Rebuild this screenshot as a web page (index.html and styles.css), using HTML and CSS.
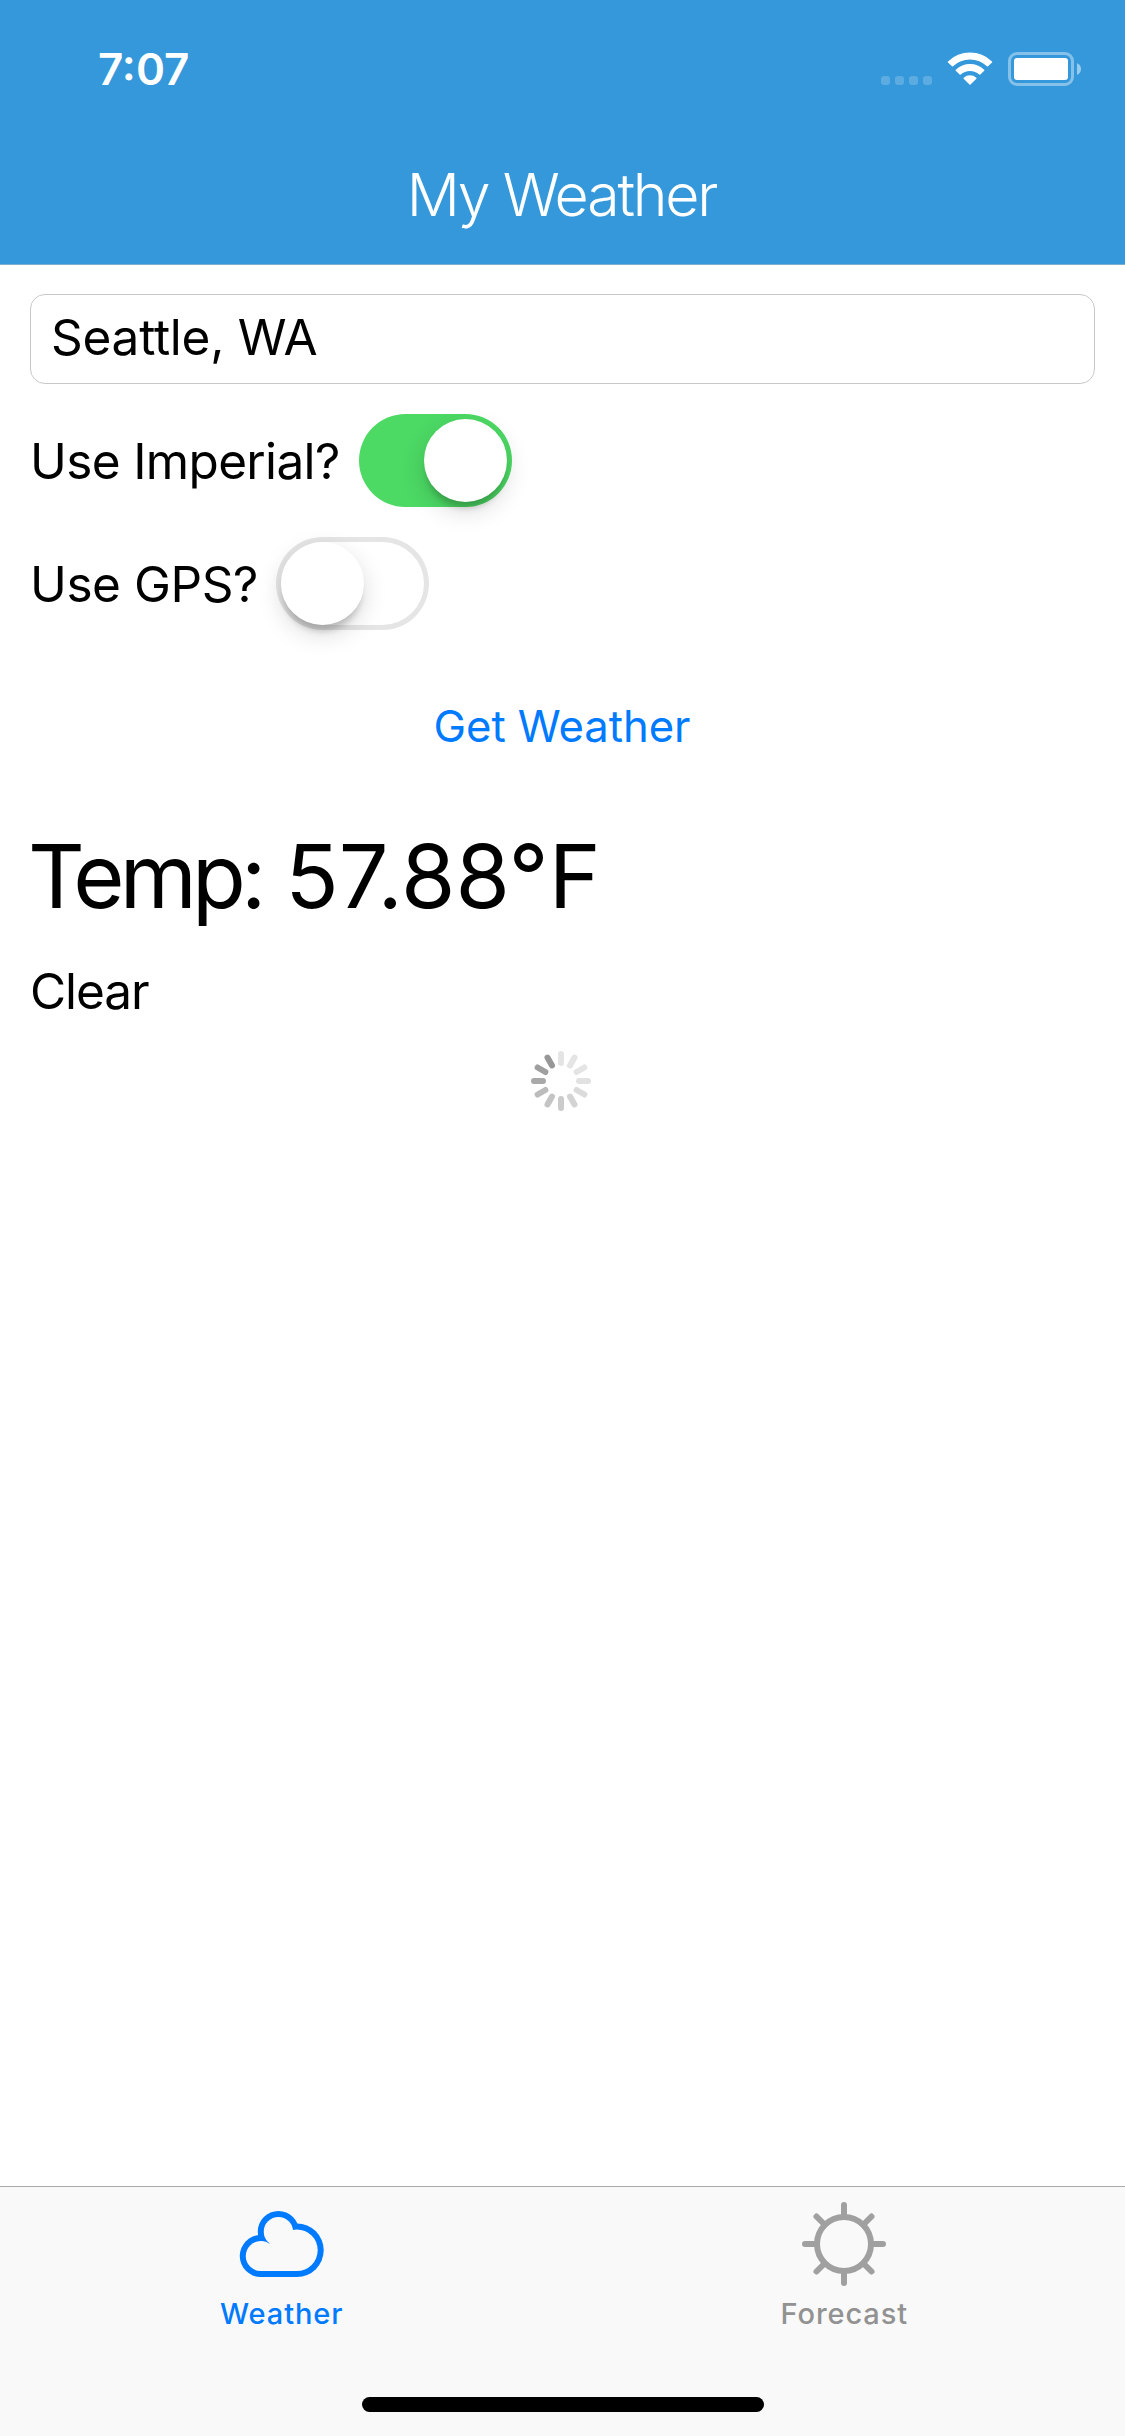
FILE: index.html
```
<!DOCTYPE html>
<html lang="en">
<head>
<meta charset="utf-8">
<title>My Weather</title>
<link rel="stylesheet" href="styles.css">
</head>
<body>
<div class="screen">
  <header class="header">
    <div class="status">
      <span class="time">7:07</span>
      <svg class="status-icons" width="202" height="36" viewBox="0 0 202 36" aria-hidden="true">
        <g fill="#fff" fill-opacity=".2">
          <rect x="1" y="24" width="9" height="9" rx="3"/>
          <rect x="15" y="24" width="9" height="9" rx="3"/>
          <rect x="29" y="24" width="9" height="9" rx="3"/>
          <rect x="43" y="24" width="9" height="9" rx="3"/>
        </g>
        <g fill="#fff" stroke="#fff" stroke-width="1.5" stroke-linejoin="round">
          <path d="M68.5 10 A31 31 0 0 1 111.5 10 L107.5 13.8 A25.4 25.4 0 0 0 72.5 13.8 Z"/>
          <path d="M76.3 18.2 A20 20 0 0 1 103.7 18.2 L99.8 22 A14.4 14.4 0 0 0 80.2 22 Z"/>
          <path d="M84.2 26.2 A9 9 0 0 1 95.8 26.2 L90 32 Z"/>
        </g>
        <rect x="129.500" y="1.500" width="63" height="31" rx="7.500" fill="none" stroke="#fff" stroke-opacity=".4" stroke-width="3"/>
        <rect x="134" y="6" width="54" height="22" rx="3" fill="#fff"/>
        <path d="M197 11 Q201 13 201 17 T197 23 Z" fill="#fff" fill-opacity=".5"/>
      </svg>
    </div>
    <h1 class="title">My Weather</h1>
  </header>

  <main class="content">
    <div class="field">Seattle, WA</div>
    <div class="row">
      <span class="row-label imperial">Use Imperial?</span>
      <span class="switch on"><span class="knob"></span></span>
    </div>
    <div class="row">
      <span class="row-label gps">Use GPS?</span>
      <span class="switch"><span class="knob"></span></span>
    </div>
    <div class="action">Get Weather</div>
    <div class="temp"><span class="temp-label">Temp:</span> 57.88°F</div>
    <div class="condition">Clear</div>
    <svg class="spinner" width="60" height="60" viewBox="-30 -30 60 60" stroke-width="6" stroke-linecap="round" aria-hidden="true">
      <path d="M0-18V-27" stroke="#e4e4e4"/>
      <path d="M0-18V-27" stroke="#e4e4e4" transform="rotate(30)"/>
      <path d="M0-18V-27" stroke="#e4e4e4" transform="rotate(60)"/>
      <path d="M0-18V-27" stroke="#e2e2e2" transform="rotate(90)"/>
      <path d="M0-18V-27" stroke="#dbdbdb" transform="rotate(120)"/>
      <path d="M0-18V-27" stroke="#d3d3d3" transform="rotate(150)"/>
      <path d="M0-18V-27" stroke="#cbcbcb" transform="rotate(180)"/>
      <path d="M0-18V-27" stroke="#c4c4c4" transform="rotate(210)"/>
      <path d="M0-18V-27" stroke="#bcbcbc" transform="rotate(240)"/>
      <path d="M0-18V-27" stroke="#a9a9a9" transform="rotate(270)"/>
      <path d="M0-18V-27" stroke="#9f9f9f" transform="rotate(300)"/>
      <path d="M0-18V-27" stroke="#979797" transform="rotate(330)"/>
    </svg>
  </main>

  <nav class="tabs">
    <div class="tab-list">
      <div class="tab active">
        <svg width="90" height="90" viewBox="0 0 90 90" aria-hidden="true">
          <g fill="currentColor">
            <circle cx="24.750" cy="57" r="21"/>
            <circle cx="42.400" cy="32.650" r="20.650"/>
            <circle cx="60.900" cy="51.200" r="26.800"/>
            <path d="M24.750 78H60.900V51L50 40H33L24.750 57Z"/>
          </g>
          <g class="cloud-inside">
            <circle cx="24.750" cy="57" r="15"/>
            <circle cx="42.400" cy="32.650" r="14.650"/>
            <circle cx="60.900" cy="51.200" r="20.800"/>
            <path d="M24.750 72H60.900V51L55.800 31.200L33.500 44.600L24.750 57Z"/>
          </g>
        </svg>
        <span class="tab-label">Weather</span>
      </div>
      <div class="tab">
        <svg width="90" height="90" viewBox="-45 -45 90 90" fill="none" stroke="currentColor" stroke-width="6" stroke-linecap="round" aria-hidden="true">
          <circle r="27"/>
          <path d="M0-28V-39M0 28V39M-28 0H-39M28 0H39M-20-20-27.500-27.500M20-20 27.500-27.500M-20 20-27.500 27.500M20 20 27.500 27.500"/>
        </svg>
        <span class="tab-label">Forecast</span>
      </div>
    </div>
    <div class="home-bar"></div>
  </nav>
</div>
</body>
</html>
```

FILE: styles.css
```
* { box-sizing: border-box; }

body {
  margin: 0;
  background: #fff;
  color: #000;
  font-family: "Inter", "Liberation Sans", sans-serif;
}

.screen {
  width: 1125px;
  height: 2436px;
  display: flex;
  flex-direction: column;
  overflow: hidden;
}

.header {
  height: 265px;
  flex: none;
  background: #3498db;
  border-bottom: 1px solid #7eacce;
  color: #fff;
}

.status {
  height: 140px;
  padding: 0 43px 0 98px;
  display: flex;
  align-items: center;
  justify-content: space-between;
}

.time {
  margin-bottom: 2px;
  font-size: 44px;
  font-weight: 600;
  line-height: 60px;
}

.status-icons { display: block; }

.title {
  margin: 15px 2px 0 0;
  font-size: 59px;
  font-weight: 300;
  line-height: 80px;
  letter-spacing: -2.2px;
  text-align: center;
}

.content {
  flex: 1;
  padding: 29px 30px 0;
  display: flex;
  flex-direction: column;
}

.field {
  height: 90px;
  padding: 0 20px;
  border: 1px solid #c8c8c8;
  border-radius: 15px;
  font-size: 49.5px;
  line-height: 85px;
  letter-spacing: -0.25px;
}

.row {
  height: 93px;
  margin-top: 30px;
  display: flex;
  align-items: center;
}

.row-label {
  padding-top: 1px;
  font-size: 49.5px;
  line-height: 93px;
  letter-spacing: -0.65px;
}

.imperial { width: 329px; }
.gps { width: 246px; letter-spacing: -0.44px; }

.switch {
  width: 153px;
  height: 93px;
  padding: 5px;
  display: flex;
  border-radius: 47px;
  box-shadow: inset 0 0 0 5px #e5e5e5;
}

.switch.on {
  justify-content: flex-end;
  background: #4cd964;
  box-shadow: none;
}

.knob {
  width: 83px;
  height: 83px;
  border-radius: 50%;
  background: #fff;
  box-shadow: 0 9px 24px rgba(0, 0, 0, .15), 0 9px 6px -3px rgba(0, 0, 0, .18);
}

.action {
  margin: 67px 1px 0 0;
  color: #007aff;
  font-size: 43.6px;
  line-height: 60px;
  letter-spacing: -0.05px;
  text-align: center;
}

.temp {
  margin: 69px 0 0 -2px;
  font-size: 88px;
  line-height: 100px;
  letter-spacing: 0;
  word-spacing: -1px;
}

.temp-label { letter-spacing: -4.8px; }

.condition {
  margin: 35px 0 0;
  font-size: 49.5px;
  line-height: 60px;
  letter-spacing: -1.1px;
}

.spinner {
  display: block;
  margin: 30px 0 0 501px;
}

.tabs {
  height: 250px;
  flex: none;
  padding-bottom: 24px;
  display: flex;
  flex-direction: column;
  justify-content: space-between;
  align-items: center;
  background: #f9f9f9;
  border-top: 1px solid #a9a9a9;
}

.tab-list {
  width: 100%;
  padding-top: 12px;
  display: flex;
}

.tab {
  flex: 1;
  display: flex;
  flex-direction: column;
  align-items: center;
  color: #a0a0a0;
}

.tab svg { display: block; }

.tab-label {
  margin-top: 5px;
  padding-left: 1px;
  color: #929292;
  font-size: 29px;
  font-weight: 500;
  line-height: 40px;
  letter-spacing: 0.9px;
}

.tab.active,
.active .tab-label { color: #007aff; }

.cloud-inside { fill: #f9f9f9; }

.home-bar {
  width: 402px;
  height: 15px;
  border-radius: 8px;
  background: #000;
}
```
